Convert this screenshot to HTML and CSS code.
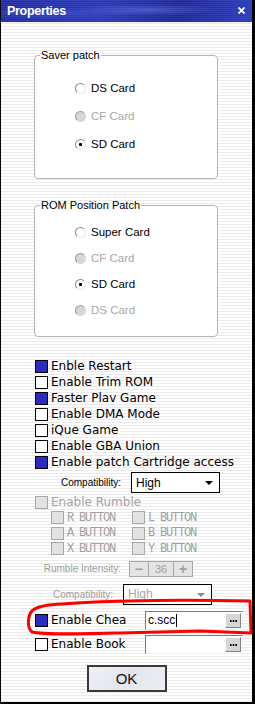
FILE: index.html
```html
<!DOCTYPE html>
<html lang="en">
<head>
    <meta charset="UTF-8">
    <title>Properties</title>
    <link rel="stylesheet" href="styles.css">
</head>
<body>
    <div class="window">
        <div class="titlebar">
            <span class="title">Properties</span>
            <svg class="close" width="7" height="7" viewBox="0 0 7 7"><path d="M0.5 0.5 L6.5 6.5 M6.5 0.5 L0.5 6.5" stroke="#fff" stroke-width="1.8"/></svg>
        </div>

        <fieldset class="group saver">
            <legend>Saver patch</legend>
            <div class="radios">
                <div class="radio"><span class="dot"></span>DS Card</div>
                <div class="radio disabled"><span class="dot"></span>CF Card</div>
                <div class="radio checked"><span class="dot"></span>SD Card</div>
            </div>
        </fieldset>

        <fieldset class="group rompos">
            <legend>ROM Position Patch</legend>
            <div class="radios">
                <div class="radio"><span class="dot"></span>Super Card</div>
                <div class="radio disabled"><span class="dot"></span>CF Card</div>
                <div class="radio checked"><span class="dot"></span>SD Card</div>
                <div class="radio disabled"><span class="dot"></span>DS Card</div>
            </div>
        </fieldset>

        <div class="checks">
            <div class="check on"><span class="box"></span>Enble Restart</div>
            <div class="check"><span class="box"></span>Enable Trim ROM</div>
            <div class="check on"><span class="box"></span>Faster Plav Game</div>
            <div class="check"><span class="box"></span>Enable DMA Mode</div>
            <div class="check"><span class="box"></span>iQue Game</div>
            <div class="check"><span class="box"></span>Enable GBA Union</div>
            <div class="check on"><span class="box"></span>Enable patch Cartridge access</div>
        </div>

        <div class="field compat">
            <span class="field-label">Compatibility:</span>
            <div class="select">High<span class="arrow"></span></div>
        </div>

        <div class="check disabled rumble"><span class="box"></span>Enable Rumble</div>
        <div class="buttons">
            <div class="btn"><span class="box"></span>R BUTTON</div>
            <div class="btn"><span class="box"></span>L BUTTON</div>
            <div class="btn"><span class="box"></span>A BUTTON</div>
            <div class="btn"><span class="box"></span>B BUTTON</div>
            <div class="btn"><span class="box"></span>X BUTTON</div>
            <div class="btn"><span class="box"></span>Y BUTTON</div>
        </div>

        <div class="field intensity">
            <span class="field-label">Rumble Intensity:</span>
            <div class="spin">
                <span class="spin-btn">&minus;</span>
                <span class="spin-val">36</span>
                <span class="spin-btn">+</span>
            </div>
        </div>

        <div class="field compat2">
            <span class="field-label">Compatibility:</span>
            <div class="select disabled">High<span class="arrow"></span></div>
        </div>

        <div class="file-row cheat">
            <div class="check on"><span class="box"></span>Enable Chea</div>
            <div class="filebox">
                <span class="file-text">c.scc<span class="caret"></span></span>
                <span class="browse"><svg width="7" height="2" viewBox="0 0 7 2"><rect x="0" y="0" width="1.6" height="2" fill="#000"/><rect x="2.7" y="0" width="1.6" height="2" fill="#000"/><rect x="5.4" y="0" width="1.6" height="2" fill="#000"/></svg></span>
            </div>
        </div>
        <div class="file-row book">
            <div class="check"><span class="box"></span>Enable Book</div>
            <div class="filebox">
                <span class="file-text"></span>
                <span class="browse"><svg width="7" height="2" viewBox="0 0 7 2"><rect x="0" y="0" width="1.6" height="2" fill="#000"/><rect x="2.7" y="0" width="1.6" height="2" fill="#000"/><rect x="5.4" y="0" width="1.6" height="2" fill="#000"/></svg></span>
            </div>
        </div>

        <button class="ok">OK</button>

        <!-- hand drawn marker around the cheat row -->
        <svg class="marker" width="255" height="704" viewBox="0 0 255 704">
            <path d="M76 603 C130 600 200 600 250 601 L251 633 L200 631 L120 633 C80 634 45 635 32 632 C27 628 27 615 33 610 C42 604 60 604 76 603" fill="none" stroke="#f00" stroke-width="3" stroke-linejoin="round"/>
        </svg>
    </div>
</body>
</html>
```

FILE: styles.css
```css
* {
    box-sizing: border-box;
}
body {
    margin: 0;
    background: #fff;
    font-family: "DejaVu Sans", sans-serif;
}
.window {
    position: relative;
    width: 255px;
    height: 704px;
    border-left: 1px solid #000;
    border-right: 3px solid #000;
    border-bottom: 2px solid #000;
    background: repeating-linear-gradient(to bottom, #fff 0, #fff 2px, #ebebeb 2px, #ebebeb 3px);
    display: flex;
    flex-direction: column;
    align-items: flex-start;
}
.titlebar {
    width: 100%;
    height: 23px;
    flex: none;
    display: flex;
    align-items: center;
    justify-content: space-between;
    padding: 0 7px 1px 6px;
    color: #fff;
    border-bottom: 1px solid #f4f4f4;
    background:
        repeating-linear-gradient(to bottom, rgba(255, 255, 255, 0.05) 0, rgba(255, 255, 255, 0.05) 1px, transparent 1px, transparent 2px),
        radial-gradient(ellipse at 58% 45%, rgba(90, 110, 230, 0.6) 0, transparent 35%),
        radial-gradient(ellipse at 20% 60%, rgba(70, 90, 220, 0.5) 0, transparent 30%),
        linear-gradient(90deg, #222da4, #2b39b8 40%, #1f2997 70%, #2c3bbe);
}
.title {
    font: bold 12.5px "Liberation Sans", sans-serif;
    letter-spacing: -0.3px;
}

/* group boxes */
.group {
    margin: 0 0 0 33px;
    width: 184px;
    padding: 0;
    border: 1px solid #b4b4b4;
    border-radius: 4px;
    background: #fff;
    min-inline-size: 0;
}
.group legend {
    margin-left: 5px;
    padding: 0 1px;
    font: 11px/13px "Liberation Sans", sans-serif;
    color: #000;
}
.saver {
    margin-top: 26px;
}
.saver .radios {
    padding: 12px 0 20px 40px;
}
.saver .radio {
    height: 28px;
}
.rompos {
    margin-top: 20px;
}
.rompos .radios {
    padding: 7px 0 13px 40px;
}
.rompos .radio {
    height: 26px;
}
.radio {
    display: flex;
    align-items: center;
    font: 11.5px "Liberation Sans", sans-serif;
    color: #000;
}
.radio .dot {
    width: 11px;
    height: 11px;
    margin-right: 5px;
    border-radius: 50%;
    border: 1px solid;
    border-color: #8a8a8a #e6e6e6 #e6e6e6 #8a8a8a;
    background: #fff;
    display: flex;
    align-items: center;
    justify-content: center;
}
.radio.disabled {
    color: #a8a8a8;
}
.radio.disabled .dot {
    background: #d6d6d6;
    border-color: #9a9a9a #d6d6d6 #d6d6d6 #9a9a9a;
}
.radio.checked .dot::after {
    content: "";
    width: 3px;
    height: 3px;
    border-radius: 1px;
    background: #000;
}

/* checkboxes */
.checks {
    margin-top: 21px;
}
.check {
    height: 16px;
    display: flex;
    align-items: center;
    padding-left: 34px;
    font-size: 12px;
    color: #000;
    white-space: nowrap;
}
.box {
    width: 13px;
    height: 13px;
    flex: none;
    margin-right: 3px;
    border: 1px solid #000;
    background: #fff;
}
.check.on .box {
    background: #2b2bc4;
}
.check.disabled {
    color: #a4a4a4;
}
.check.disabled .box,
.btn .box {
    border-color: #a8a8a8;
    background: #e2e2e2;
}
.rumble {
    margin-top: 1px;
}
.buttons {
    display: grid;
    grid-template-columns: 81px 81px;
    grid-auto-rows: 15.5px;
    padding-left: 50px;
}
.btn {
    display: flex;
    align-items: center;
    font: 12px "Liberation Mono", monospace;
    letter-spacing: -1.2px;
    color: #a0a0a0;
}
.btn .box {
    width: 13px;
    height: 13px;
}

/* label + control rows */
.field {
    display: flex;
    align-items: center;
    font: 10px "Liberation Sans", sans-serif;
}
.field-label {
    text-align: right;
}
.compat {
    margin-top: 2px;
}
.compat .field-label {
    width: 120px;
    margin-right: 10px;
}
.select {
    position: relative;
    width: 89px;
    height: 21px;
    border: 1px solid #000;
    background: #fff;
    padding-left: 4px;
    display: flex;
    align-items: center;
    font: 12px "Liberation Sans", sans-serif;
    color: #000;
}
.arrow {
    position: absolute;
    right: 6px;
    top: 8px;
    border-left: 4px solid transparent;
    border-right: 4px solid transparent;
    border-top: 4px solid #000;
}
.select.disabled {
    color: #a8a8a8;
}
.select.disabled .arrow {
    border-top-color: #8a8a8a;
}
.intensity {
    margin-top: 4px;
    color: #a0a0a0;
}
.intensity .field-label {
    width: 120px;
    margin-right: 8px;
}
.spin {
    display: flex;
    height: 16px;
    width: 64px;
    border: 1px solid #a8a8a8;
    background: #e4e4e4;
}
.spin-btn,
.spin-val {
    display: flex;
    align-items: center;
    justify-content: center;
    font: bold 14px "Liberation Sans", sans-serif;
    color: #a0a0a0;
}
.spin-btn {
    width: 18px;
}
.spin-val {
    width: 27px;
    border-left: 1px solid #a8a8a8;
    border-right: 1px solid #a8a8a8;
    font: 11px "Liberation Sans", sans-serif;
}
.compat2 {
    margin-top: 7px;
    color: #a0a0a0;
}
.compat2 .field-label {
    width: 112px;
    margin-right: 10px;
}

/* file pickers */
.file-row {
    display: flex;
    align-items: center;
}
.file-row .check {
    width: 144px;
}
.cheat {
    margin-top: 6px;
}
.book {
    margin-top: 5px;
}
.filebox {
    width: 98px;
    height: 19px;
    display: flex;
    align-items: center;
    justify-content: space-between;
    padding: 0 1px 0 2px;
    border: 1px solid;
    border-color: #7a7a7a #f0f0f0 #f0f0f0 #7a7a7a;
    background: #fff;
}
.file-text {
    display: flex;
    align-items: center;
    font: 12px "Liberation Sans", sans-serif;
    color: #000;
}
.caret {
    width: 1px;
    height: 13px;
    margin-left: 1px;
    background: #000;
}
.browse {
    width: 16px;
    height: 15px;
    display: flex;
    align-items: center;
    justify-content: center;
    padding-top: 2px;
    border: 1px solid;
    border-color: #fff #808080 #808080 #fff;
    background: #d6d6d6;
}

.ok {
    align-self: center;
    margin-top: 11px;
    width: 80px;
    height: 27px;
    border: 2px solid #3a3a3a;
    background: linear-gradient(135deg, #eef0f4, #e2e6ec 50%, #eceef2);
    font: 15px "Liberation Sans", sans-serif;
    color: #111;
    padding: 0;
}

.marker {
    position: absolute;
    left: -1px;
    top: 0;
    pointer-events: none;
}
```
